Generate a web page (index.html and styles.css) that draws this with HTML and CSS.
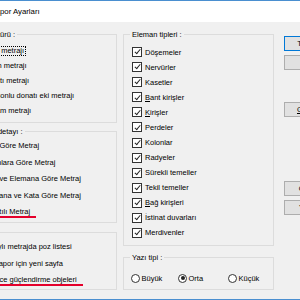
FILE: index.html
```html
<!DOCTYPE html>
<html lang="tr">
<head>
    <meta charset="UTF-8">
    <title>Rapor Ayarları</title>
    <link rel="stylesheet" href="styles.css">
</head>
<body>
    <div class="window">
        <div class="titlebar">Rapor Ayarları</div>

        <div class="client">
            <!-- sol kolon -->
            <div class="col-left">
                <div class="group g-type">
                    <div class="group-title">Metraj türü :</div>
                    <div class="rows pad3">
                        <div class="row"><span class="rb on"></span><span class="focus">Kalıp metrajı</span></div>
                        <div class="row"><span class="rb"></span><span>Beton metrajı</span></div>
                        <div class="row"><span class="rb"></span><span>Donatı metrajı</span></div>
                        <div class="row"><span class="rb"></span><span>Manşonlu donatı eki metrajı</span></div>
                        <div class="row"><span class="rb"></span><span>Toplam metrajı</span></div>
                    </div>
                </div>

                <div class="group g-detail">
                    <div class="group-title">Metraj detayı :</div>
                    <div class="rows">
                        <div class="row tall"><span class="rb"></span><span>Kata Göre Metraj</span></div>
                        <div class="row tall"><span class="rb"></span><span>Kolonlara Göre Metraj</span></div>
                        <div class="row tall"><span class="rb"></span><span>Kata ve Elemana Göre Metraj</span></div>
                        <div class="row tall"><span class="rb"></span><span>Elemana ve Kata Göre Metraj</span></div>
                        <div class="row tall"><span class="rb on"></span><span class="mark">Ayrıntılı Metraj</span></div>
                    </div>
                </div>

                <div class="group g-other">
                    <div class="group-title">Diğer :</div>
                    <div class="rows">
                        <div class="row taller"><span class="rb"></span><span>Detaylı metrajda poz listesi</span></div>
                        <div class="row taller"><span class="rb"></span><span>Her rapor için yeni sayfa</span></div>
                        <div class="row taller"><span class="rb"></span><span class="mark">Sadece güçlendirme objeleri</span></div>
                    </div>
                </div>
            </div>

            <!-- orta kolon -->
            <div class="col-mid">
                <div class="group g-elem">
                    <div class="group-title">Eleman tipleri :</div>
                    <div class="checks">
                        <div class="check"><span class="cb"></span><span>Döşemeler</span></div>
                        <div class="check"><span class="cb"></span><span>Nervürler</span></div>
                        <div class="check"><span class="cb"></span><span>Kasetler</span></div>
                        <div class="check"><span class="cb"></span><span><u>B</u>ant kirişler</span></div>
                        <div class="check"><span class="cb"></span><span><u>K</u>irişler</span></div>
                        <div class="check"><span class="cb"></span><span>Perdeler</span></div>
                        <div class="check"><span class="cb"></span><span>Kolonlar</span></div>
                        <div class="check"><span class="cb"></span><span>Radyeler</span></div>
                        <div class="check"><span class="cb"></span><span>Sürekli temeller</span></div>
                        <div class="check"><span class="cb"></span><span>Tekil temeller</span></div>
                        <div class="check"><span class="cb"></span><span><u>B</u>ağ kirişleri</span></div>
                        <div class="check"><span class="cb"></span><span>İstinat duvarları</span></div>
                        <div class="check"><span class="cb"></span><span>Merdivenler</span></div>
                    </div>
                </div>

                <div class="group g-font">
                    <div class="group-title">Yazı tipi :</div>
                    <div class="font-opts">
                        <div class="opt"><span class="rb"></span><span>Büyük</span></div>
                        <div class="opt"><span class="rb on"></span><span>Orta</span></div>
                        <div class="opt"><span class="rb"></span><span>Küçük</span></div>
                    </div>
                </div>
            </div>

            <!-- butonlar -->
            <div class="col-btns">
                <div class="btn default">Tamam</div>
                <div class="btn">İptal</div>
                <div class="btn gap1"><span><u>G</u>önder</span></div>
                <div class="btn gap2">Önizle</div>
                <div class="btn">Yazdır</div>
            </div>
        </div>
    </div>
</body>
</html>
```

FILE: styles.css
```css
html, body {
    overflow: hidden;
}

body {
    margin: 0;
    background-color: #4a8fd0;
    font-family: "Liberation Sans", Arial, sans-serif;
    font-size: 7.5px;
    color: #000;
}

.window {
    margin-left: -40px;
    width: 380px;
    height: 298px;
    border-top: 1px solid #4a8fd0;
    display: flex;
    flex-direction: column;
}

.titlebar {
    height: 21px;
    background-color: #ffffff;
    padding-left: 30px;
    display: flex;
    align-items: center;
    font-size: 7.8px;
}

.client {
    flex: 1;
    background-color: #f0f0f0;
    display: flex;
    padding: 12px 0 0 6px;
}

.group {
    border: 1px solid #dcdcdc;
    box-sizing: border-box;
}

.group-title {
    margin: -5px 0 0 6px;
    padding: 0 2px;
    width: max-content;
    line-height: 10px;
    background-color: #f0f0f0;
}

/* sol kolon */
.col-left {
    width: 151px;
    display: flex;
    flex-direction: column;
}

.g-type {
    height: 89px;
}

.g-detail {
    height: 92px;
    margin-top: 8px;
}

.g-other {
    height: 58px;
    margin-top: 9px;
}

.pad3 {
    padding-top: 3px;
}

.row {
    display: flex;
    align-items: center;
    gap: 3px;
    height: 15px;
    padding-left: 3px;
    white-space: nowrap;
}

.row.tall {
    height: 16.75px;
}

.row.taller {
    height: 17px;
}

.focus {
    outline: 1px dotted #000;
    outline-offset: 0;
    line-height: 8px;
    padding-right: 1px;
}

.mark {
    display: inline-block;
    line-height: 9px;
    padding-right: 6px;
    border-bottom: 2px solid #e4002b;
}

/* orta kolon */
.col-mid {
    width: 151px;
    margin-left: 6px;
    display: flex;
    flex-direction: column;
}

.g-elem {
    height: 212px;
}

.g-font {
    height: 33px;
    margin-top: 11px;
}

.checks {
    padding-top: 4.5px;
}

.check {
    display: flex;
    align-items: center;
    gap: 3px;
    height: 15.08px;
    padding-left: 8px;
    white-space: nowrap;
}

.cb {
    position: relative;
    flex: none;
    width: 10px;
    height: 10px;
    box-sizing: border-box;
    border: 1px solid #333;
    background-color: #fff;
}

.cb::after {
    content: "";
    position: absolute;
    left: 2.6px;
    top: 0.3px;
    width: 2.4px;
    height: 5.2px;
    border: solid #222;
    border-width: 0 1px 1px 0;
    transform: rotate(40deg);
}

.rb {
    position: relative;
    flex: none;
    width: 9px;
    height: 9px;
    box-sizing: border-box;
    border: 1px solid #333;
    border-radius: 50%;
    background-color: #fff;
}

.rb.on::after {
    content: "";
    position: absolute;
    left: 1.5px;
    top: 1.5px;
    width: 4px;
    height: 4px;
    border-radius: 50%;
    background-color: #222;
}

.font-opts {
    display: grid;
    grid-template-columns: 47px 50px auto;
    padding: 9px 0 0 7px;
}

.opt {
    display: flex;
    align-items: center;
    gap: 1.5px;
    height: 12px;
}

/* butonlar */
.col-btns {
    margin-left: 10px;
    padding-top: 2px;
    display: flex;
    flex-direction: column;
}

.btn {
    width: 51px;
    height: 15px;
    box-sizing: border-box;
    border: 1px solid #adadad;
    background-color: #e1e1e1;
    display: flex;
    align-items: center;
    justify-content: center;
    margin-bottom: 4px;
    white-space: nowrap;
}

.btn.default {
    border-color: #0078d7;
}

.btn.gap1 {
    margin-top: 28px;
}

.btn.gap2 {
    margin-top: 60px;
}
```
